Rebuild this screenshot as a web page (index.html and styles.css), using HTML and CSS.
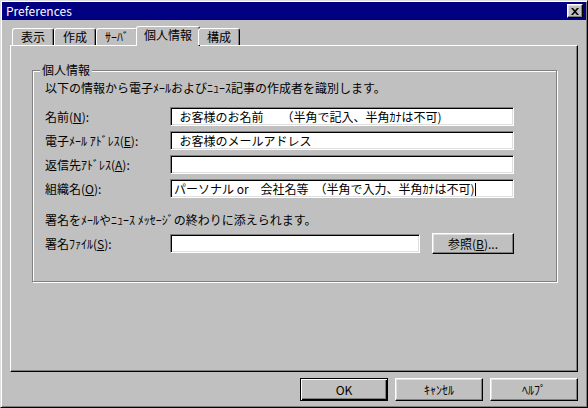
FILE: index.html
```html
<!DOCTYPE html>
<html>

<head>
    <meta charset="utf-8">
    <link rel="stylesheet" href="styles.css">
</head>

<body>
    <div class="window">
        <div class="titlebar">
            <span class="title">Preferences</span>
            <span class="close-btn">
                <svg width="8" height="7" viewBox="0 0 8 7">
                    <path d="M0 0h2l2 2.2L6 0h2L5 3.5 8 7H6L4 4.8 2 7H0l3-3.5z" fill="#000"/>
                </svg>
            </span>
        </div>
        <div class="body">
            <div class="tabs">
                <div class="tab">表示</div>
                <div class="tab">作成</div>
                <div class="tab">ｻｰﾊﾞ</div>
                <div class="tab active">個人情報</div>
                <div class="tab">構成</div>
            </div>
            <div class="panel">
                <div class="group">
                    <span class="legend">個人情報</span>
                    <p class="note">以下の情報から電子ﾒｰﾙおよびﾆｭｰｽ記事の作成者を識別します。</p>
                    <div class="rows">
                        <div class="row">
                            <label>名前(<u>N</u>):</label>
                            <div class="field">&nbsp; お客様のお名前　　（半角で記入、半角ｶﾅは不可)</div>
                        </div>
                        <div class="row">
                            <label>電子ﾒｰﾙ ｱﾄﾞﾚｽ(<u>E</u>):</label>
                            <div class="field">&nbsp; お客様のメールアドレス</div>
                        </div>
                        <div class="row">
                            <label>返信先ｱﾄﾞﾚｽ(<u>A</u>):</label>
                            <div class="field"></div>
                        </div>
                        <div class="row">
                            <label>組織名(<u>O</u>):</label>
                            <div class="field">パーソナル or　会社名等　（半角で入力、半角ｶﾅは不可)<span class="caret"></span></div>
                        </div>
                    </div>
                    <p class="note sig-note">署名をﾒｰﾙやﾆｭｰｽ ﾒｯｾｰｼﾞの終わりに添えられます。</p>
                    <div class="row sig-row">
                        <label>署名ﾌｧｲﾙ(<u>S</u>):</label>
                        <div class="field short"></div>
                        <button class="btn browse">参照(<u>B</u>)...</button>
                    </div>
                </div>
            </div>
            <div class="actions">
                <button class="btn default">OK</button>
                <button class="btn">ｷｬﾝｾﾙ</button>
                <button class="btn">ﾍﾙﾌﾟ</button>
            </div>
        </div>
    </div>
</body>

</html>
```

FILE: styles.css
```css
* {
    box-sizing: border-box;
}

body {
    margin: 0;
    background: #c0c0c0;
    font-family: "Noto Sans CJK JP", sans-serif;
    font-size: 12px;
    color: #000;
}

.window {
    width: 588px;
    height: 408px;
    padding: 1px;
    border: 1px solid;
    border-color: #dfdfdf #000 #000 #dfdfdf;
    box-shadow: inset 1px 1px #fff, inset -1px -1px #808080;
    background: #c0c0c0;
}

.titlebar {
    height: 18px;
    background: #000080;
    color: #fff;
    display: flex;
    align-items: center;
    justify-content: space-between;
    padding: 0 3px 0 4px;
}

.title {
    line-height: 18px;
}

.close-btn {
    width: 16px;
    height: 14px;
    display: flex;
    align-items: center;
    justify-content: center;
    background: #c0c0c0;
    border: 1px solid;
    border-color: #fff #000 #000 #fff;
    box-shadow: inset -1px -1px #808080, inset 1px 1px #dfdfdf;
}

.body {
    padding: 6px 8px 0;
}

.tabs {
    display: flex;
    align-items: flex-end;
    height: 20px;
    padding-left: 2px;
    margin-bottom: -1px;
    position: relative;
    z-index: 1;
}

.tab {
    height: 17px;
    margin-bottom: 1px;
    padding: 0 8px;
    line-height: 16px;
    background: #c0c0c0;
    border: 1px solid;
    border-bottom: 0;
    border-color: #fff #000 #000 #fff;
    box-shadow: inset -1px 0 #808080;
    border-radius: 3px 3px 0 0;
}

.tab.active {
    height: 20px;
    margin: 0 -2px;
    padding: 0 7px;
    line-height: 15px;
}

.panel {
    height: 327px;
    border: 1px solid;
    border-color: #fff #000 #000 #fff;
    box-shadow: inset -1px -1px #808080;
    padding: 24px 0 0 21px;
}

.group {
    position: relative;
    width: 525px;
    height: 212px;
    border: 1px solid #808080;
    box-shadow: inset 1px 1px #fff, 1px 1px #fff;
    padding: 10px 0 0 12px;
}

.legend {
    position: absolute;
    top: -8px;
    left: 7px;
    padding: 0 2px;
    line-height: 14px;
    background: #c0c0c0;
}

.note {
    margin: 0;
    line-height: 14px;
}

.rows {
    display: flex;
    flex-direction: column;
    gap: 5px;
    margin-top: 12px;
}

.row {
    display: flex;
    align-items: center;
    height: 19px;
}

.row label {
    width: 125px;
}

.field {
    width: 344px;
    height: 19px;
    background: #fff;
    border: 1px solid;
    border-color: #808080 #fff #fff #808080;
    box-shadow: inset 1px 1px #000, inset -1px -1px #dfdfdf;
    padding-left: 3px;
    line-height: 17px;
    white-space: nowrap;
    overflow: hidden;
}

.field.short {
    width: 250px;
}

.caret {
    display: inline-block;
    width: 1px;
    height: 13px;
    background: #000;
    vertical-align: -2px;
}

.sig-note {
    margin-top: 15px;
}

.sig-row {
    margin-top: 6px;
    height: 21px;
}

.btn {
    font: inherit;
    color: #000;
    width: 88px;
    height: 23px;
    padding: 0;
    background: #c0c0c0;
    border: 1px solid;
    border-color: #fff #000 #000 #fff;
    box-shadow: inset -1px -1px #808080, inset 1px 1px #dfdfdf;
}

.btn.default {
    border-color: #000;
    box-shadow: inset 1px 1px #fff, inset -1px -1px #000, inset -2px -2px #808080;
}

.browse {
    width: 82px;
    height: 21px;
    margin-left: 12px;
}

.actions {
    display: flex;
    justify-content: flex-end;
    gap: 7px;
    margin-top: 6px;
}
```
